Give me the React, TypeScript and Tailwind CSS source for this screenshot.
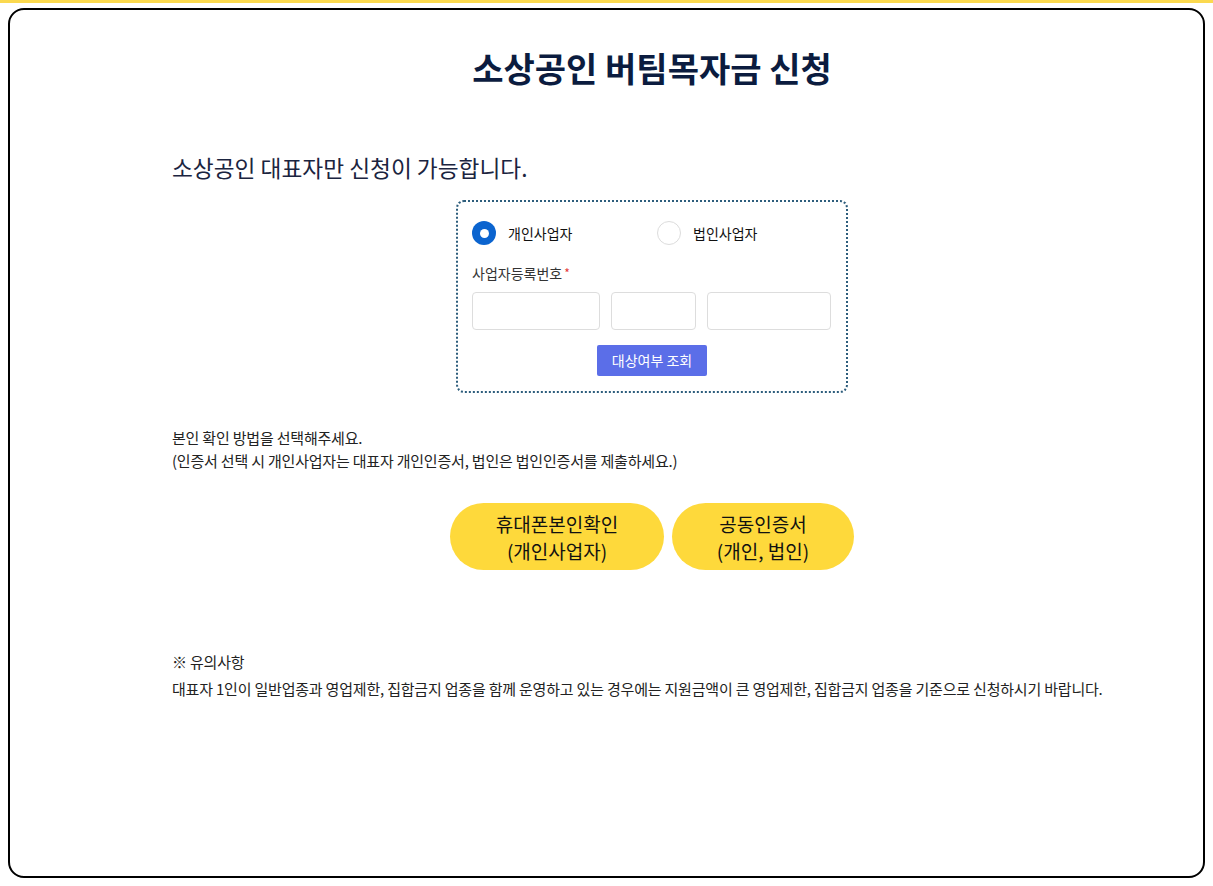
import { useState } from 'react';

const FONT = { fontFamily: '"Noto Sans CJK KR", "Noto Sans", sans-serif' };

export default function App() {
    const [type, setType] = useState<'personal' | 'corp'>('personal');

    const Radio = ({ checked }: { checked: boolean }) =>
        checked ? (
            <span className="flex h-6 w-6 items-center justify-center rounded-full bg-[#0b64cf]">
                <span className="h-[9px] w-[9px] rounded-full bg-white" />
            </span>
        ) : (
            <span className="h-6 w-6 rounded-full border border-[#dcdcdc] bg-white" />
        );

    return (
        <div className="min-h-screen bg-white" style={FONT}>
            <div className="h-[3px] bg-[#fbd94f]" />
            <div className="px-2 pb-2 pt-[5px]">
                <div className="h-[870px] rounded-[16px] border-2 border-black bg-white pt-[34px]">
                    <div className="ml-[162px] w-[960px]">
                        <h1 className="text-center text-[34px] font-bold leading-[48px] text-[#0b1c3f]">
                            소상공인 버팀목자금 신청
                        </h1>

                        <p className="mt-[60px] text-[22.7px] leading-[32px] text-[#1b2440]">
                            소상공인 대표자만 신청이 가능합니다.
                        </p>

                        <div className="mx-auto mt-[16px] w-[392px] rounded-[8px] border-2 border-dotted border-[#2d5d7c] px-[14px] pb-[15px] pt-[19px]">
                            <div className="flex items-center">
                                <button
                                    onClick={() => setType('personal')}
                                    className="flex w-[185px] items-center gap-3 text-[14px] text-[#111]"
                                >
                                    <Radio checked={type === 'personal'} />
                                    개인사업자
                                </button>
                                <button
                                    onClick={() => setType('corp')}
                                    className="flex items-center gap-3 text-[14px] text-[#111]"
                                >
                                    <Radio checked={type === 'corp'} />
                                    법인사업자
                                </button>
                            </div>

                            <div className="mt-[18px] text-[14px] leading-[20px] text-[#333]">
                                사업자등록번호<span className="ml-0.5 align-top text-[12px] text-[#e53935]">*</span>
                            </div>

                            <div className="mt-[9px] flex gap-[11px]">
                                <input className="h-[38px] w-[128px] rounded border border-[#dddddd] outline-none" />
                                <input className="h-[38px] w-[85px] rounded border border-[#dddddd] outline-none" />
                                <input className="h-[38px] w-[124px] rounded border border-[#dddddd] outline-none" />
                            </div>

                            <div className="mt-[15px] flex justify-center">
                                <button className="h-[31px] w-[110px] rounded-[2px] bg-[#5b6ee8] text-[14px] text-white">
                                    대상여부 조회
                                </button>
                            </div>
                        </div>

                        <div className="mt-[33px] text-[15px] leading-[23px] tracking-[-0.2px] text-[#222]">
                            <p>본인 확인 방법을 선택해주세요.</p>
                            <p>(인증서 선택 시 개인사업자는 대표자 개인인증서, 법인은 법인인증서를 제출하세요.)</p>
                        </div>

                        <div className="mt-[31px] flex justify-center gap-2">
                            <button className="h-[67px] w-[214px] rounded-full bg-[#fed93b] text-[19px] leading-[27px] text-[#111]">
                                휴대폰본인확인
                                <br />
                                (개인사업자)
                            </button>
                            <button className="h-[67px] w-[182px] rounded-full bg-[#fed93b] text-[19px] leading-[27px] text-[#111]">
                                공동인증서
                                <br />
                                (개인, 법인)
                            </button>
                        </div>

                        <div className="mt-[81px] text-[15px] tracking-[-0.2px] text-[#222]">
                            <p className="leading-[22px]">※ 유의사항</p>
                            <p className="mt-[5px] leading-[22px]">
                                대표자 1인이 일반업종과 영업제한, 집합금지 업종을 함께 운영하고 있는 경우에는 지원금액이 큰 영업제한, 집합금지 업종을 기준으로 신청하시기 바랍니다.
                            </p>
                        </div>
                    </div>
                </div>
            </div>
        </div>
    );
}
